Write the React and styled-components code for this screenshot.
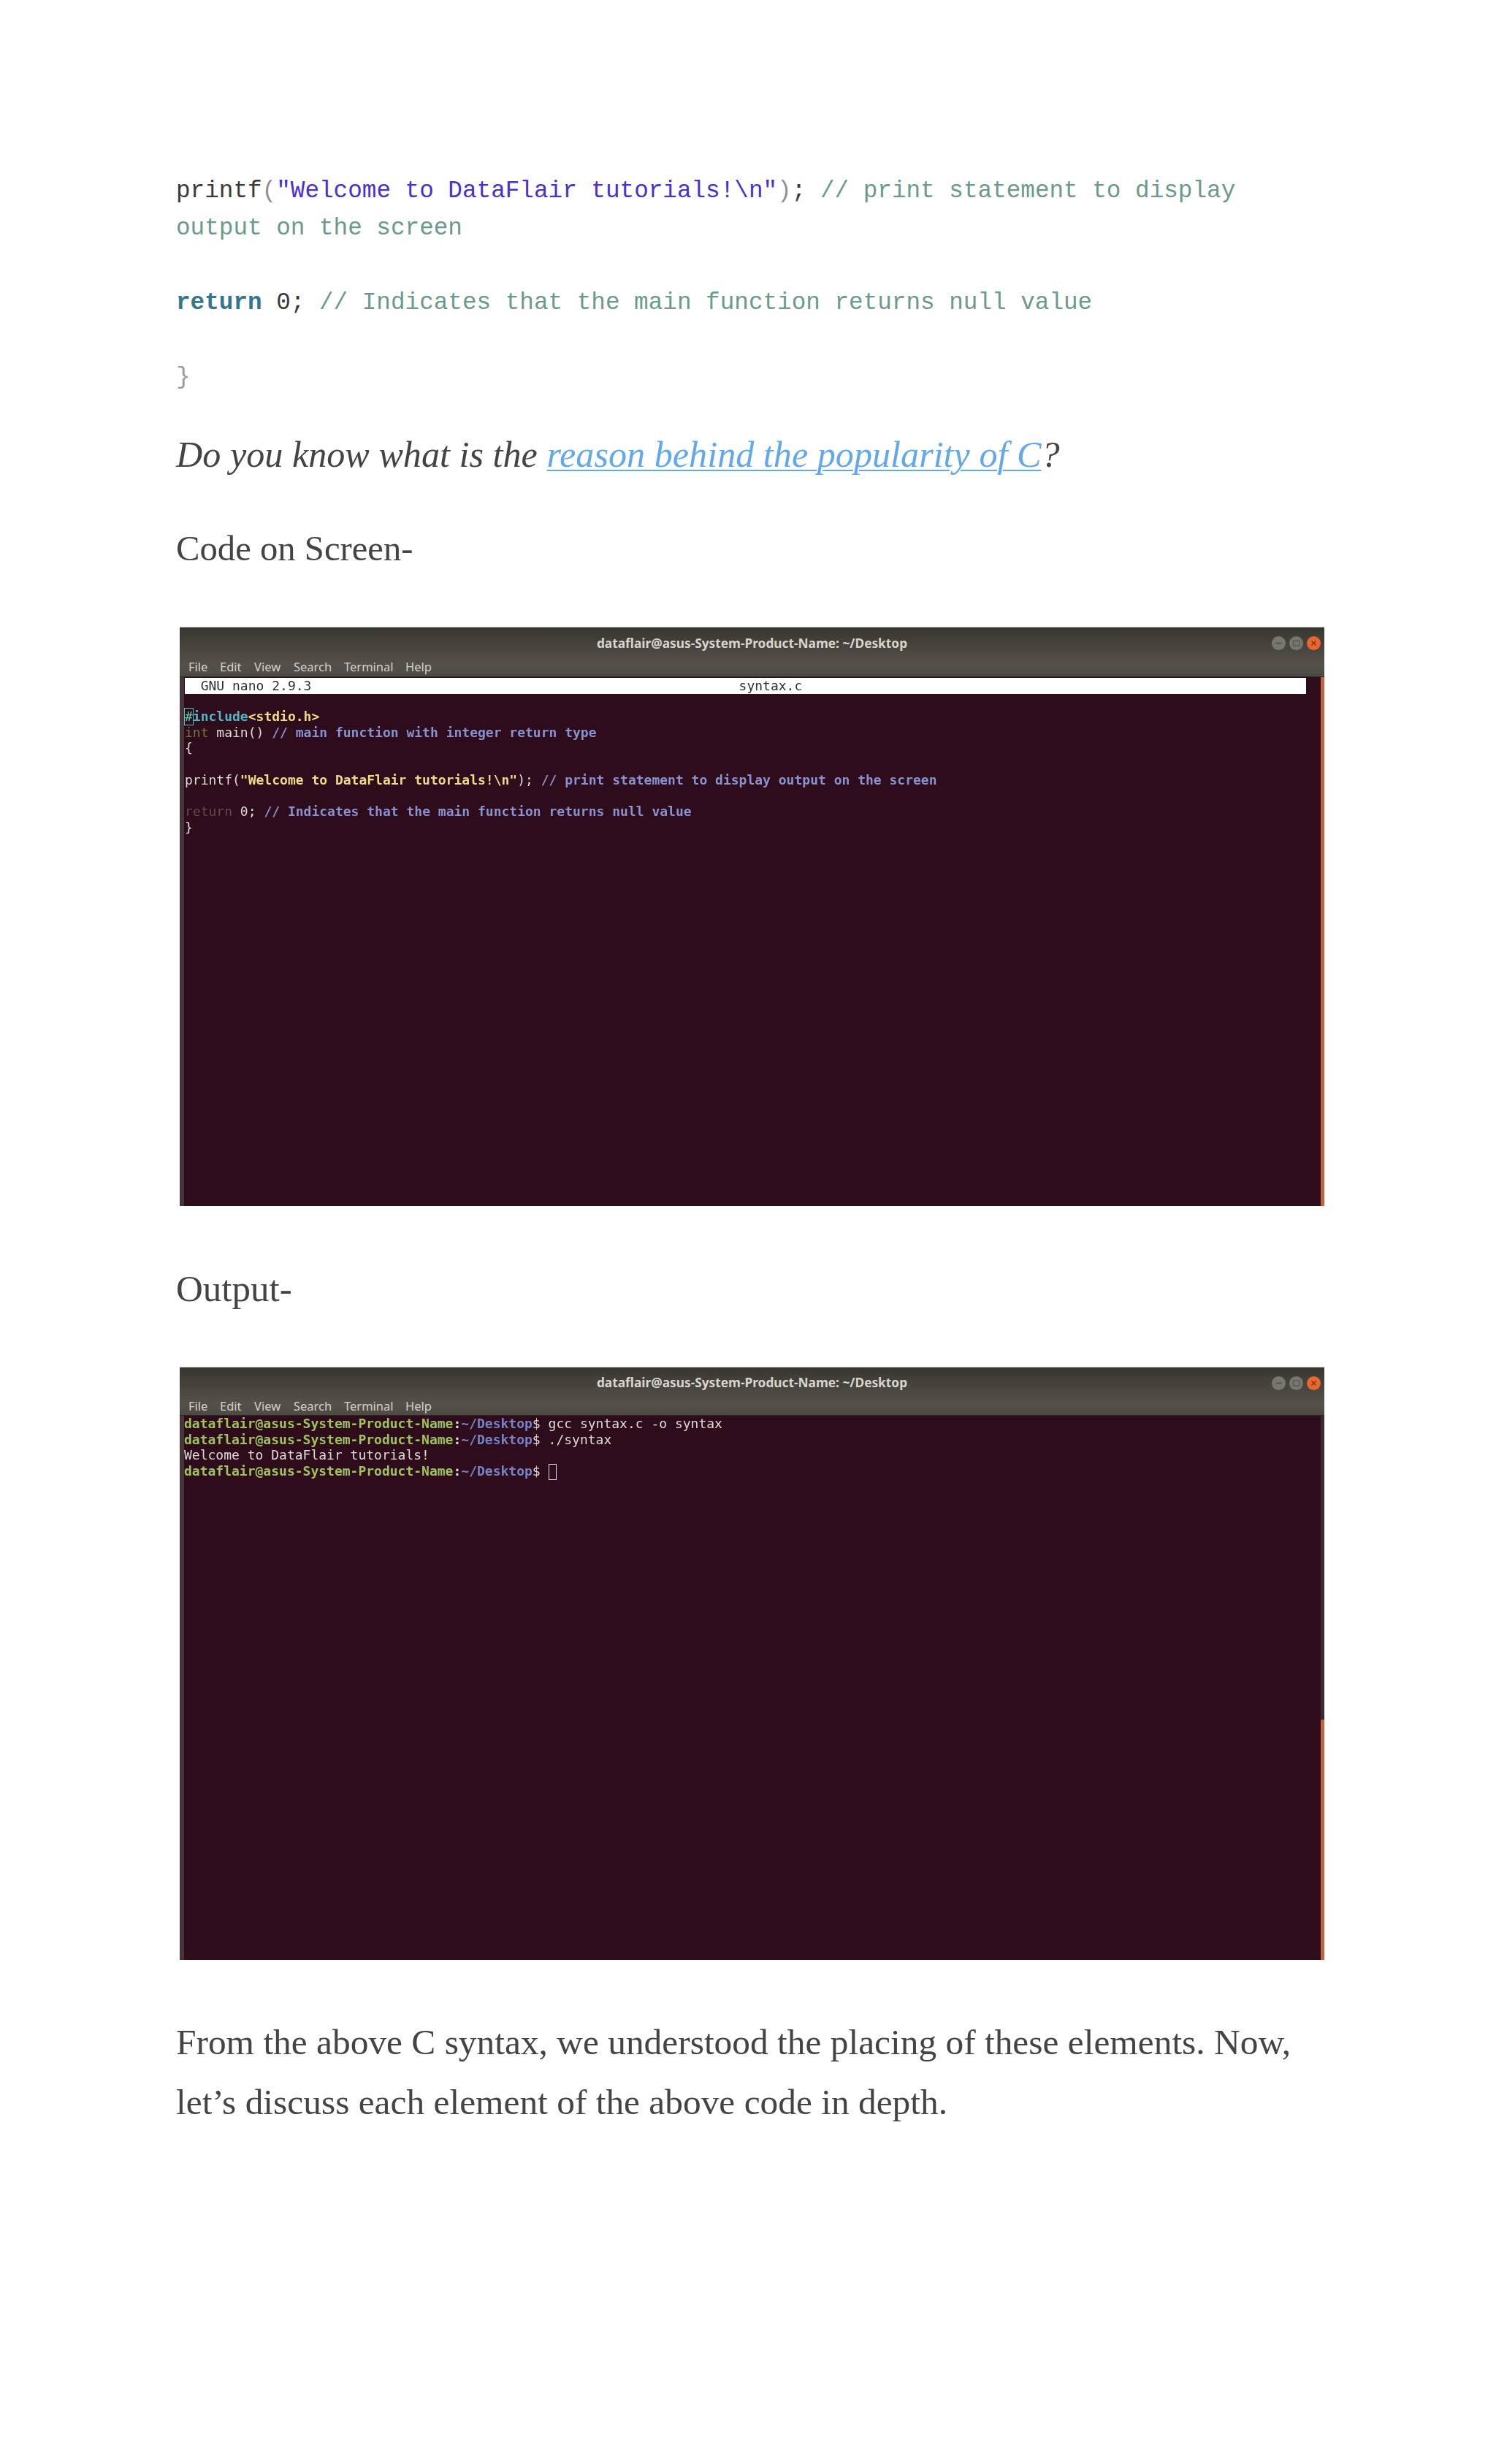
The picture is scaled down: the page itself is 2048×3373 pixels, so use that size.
import styled, { createGlobalStyle } from "styled-components";

const Global = createGlobalStyle`
  html, body { margin: 0; padding: 0; background: #fff; }
`;

const Page = styled.div`
  width: 2048px;
  height: 3373px;
  box-sizing: border-box;
  padding: 236px 0 0 241px;
  overflow: hidden;
  background: #fff;
`;

const CodeLine = styled.p`
  margin: 0 0 51px;
  width: 1500px;
  font-family: "Liberation Mono", "Courier New", monospace;
  font-size: 32.67px;
  line-height: 51px;
  color: #3a3a3a;
`;

const Comment = styled.span`color: #6b9a8c;`;
const Str = styled.span`color: #4a30cc;`;
const Paren = styled.span`color: #8f8f8f;`;
const Keyword = styled.b`color: #36768c;`;
const Brace = styled(CodeLine)`color: #9a9a9a; margin-bottom: 39px;`;

const Para = styled.p`
  margin: 0 0 ${(p) => p.$after || 0}px;
  width: 1570px;
  font-family: "Liberation Serif", Georgia, serif;
  font-size: ${(p) => p.$size}px;
  line-height: 82px;
  color: #444;
`;

const Link = styled.a`
  color: #62a8ec;
  text-decoration: underline;
  text-decoration-thickness: 2px;
  text-underline-offset: 4px;
`;

const Win = styled.div`
  display: flex;
  flex-direction: column;
  width: 1567px;
  height: ${(p) => p.$h}px;
  margin: 0 0 ${(p) => p.$after}px 5px;
  background: #2f0c1b;
  box-shadow: 0 -1px 0 #bbb;
  overflow: hidden;
`;

const TitleBar = styled.div`
  flex: none;
  height: ${(p) => p.$h}px;
  box-sizing: border-box;
  position: relative;
  background: linear-gradient(#37362f 0%, #46433c 35%, #55514a 75%, #4d4a44 100%);
  border-bottom: 1px solid #2a2622;
`;

const Title = styled.div`
  padding-top: ${(p) => p.$top}px;
  text-align: center;
  font-family: "Noto Sans", sans-serif;
  font-weight: 700;
  font-size: 17.3px;
  line-height: 22px;
  color: #d9d5cd;
`;

const Menu = styled.div`
  display: flex;
  padding: 11px 0 0 12px;
  font-family: "Noto Sans", sans-serif;
  font-size: 16.5px;
  line-height: 20px;
  color: #d5d1c9;
`;

const MenuItem = styled.span`
  width: ${(p) => p.$w}px;
`;

const Controls = styled.div`
  position: absolute;
  top: 12px;
  right: 5px;
  display: flex;
  gap: 5px;
`;

const Ctl = styled.span`
  display: flex;
  align-items: center;
  justify-content: center;
  width: 19px;
  height: 19px;
  border-radius: 50%;
  background: ${(p) => (p.$close ? "#e8662f" : "#77766f")};
`;

const Body = styled.div`
  flex: 1;
  display: flex;
  min-height: 0;
  border-left: 6px solid #46363c;
`;

const Screen = styled.div`
  flex: 1;
  min-width: 0;
  font-family: "DejaVu Sans Mono", monospace;
  font-size: 18px;
  line-height: 21.7px;
  color: #dcdcd8;
  white-space: pre;
  filter: blur(0.35px);
`;

const NanoBar = styled.div`
  width: 1535px;
  height: 22px;
  margin: 1px 0 20px 1px;
  background: #fff;
  color: #332f33;
`;

const Line = styled.div`
  height: 21.7px;
  padding-left: ${(p) => p.$pad ?? 1}px;
`;

const Cursor = styled.span`
  display: inline-block;
  outline: 1px solid #4fc3c8;
  outline-offset: 0;
  color: #5fd0b0;
`;

const Box = styled.span`
  display: inline-block;
  width: 11px;
  height: 22px;
  margin-bottom: -6px;
  border: 1px solid #ddd;
  box-sizing: border-box;
`;

const Tint = styled.span`
  color: ${(p) => p.$c};
  font-weight: ${(p) => (p.$b ? 700 : 400)};
`;

const Track = styled.div`
  flex: none;
  width: 5px;
  display: flex;
  flex-direction: column;
  justify-content: flex-end;
  background: #3a2a33;
`;

const Thumb = styled.div`
  height: ${(p) => p.$h}px;
  background: #c6613f;
`;

const MENU = [["File", 43], ["Edit", 47], ["View", 54], ["Search", 69], ["Terminal", 84], ["Help", 50]];
const CMT = "#8793d0";
const YEL = "#eedb86";
const GRN = "#9cc45a";
const BLU = "#7484c8";

const Window = ({ h, after, bar, titleTop, thumb, children }) => (
  <Win $h={h} $after={after}>
    <TitleBar $h={bar}>
      <Title $top={titleTop}>dataflair@asus-System-Product-Name: ~/Desktop</Title>
      <Menu>
        {MENU.map(([m, w]) => (
          <MenuItem key={m} $w={w}>{m}</MenuItem>
        ))}
      </Menu>
      <Controls>
        <Ctl>
          <svg width="11" height="11" viewBox="0 0 11 11"><path d="M1.5 5.5h8" stroke="#4c4b46" strokeWidth="1.5" /></svg>
        </Ctl>
        <Ctl>
          <svg width="11" height="11" viewBox="0 0 11 11"><rect x="1.5" y="2" width="8" height="7" fill="none" stroke="#555" strokeWidth="1.2" /></svg>
        </Ctl>
        <Ctl $close>
          <svg width="11" height="11" viewBox="0 0 11 11"><path d="M2.5 2.5l6 6M8.5 2.5l-6 6" stroke="#8a3514" strokeWidth="1.5" /></svg>
        </Ctl>
      </Controls>
    </TitleBar>
    <Body>
      {children}
      <Track><Thumb $h={thumb} /></Track>
    </Body>
  </Win>
);

const Prompt = () => (
  <>
    <Tint $c={GRN} $b>dataflair@asus-System-Product-Name</Tint>
    <Tint $c="#dcdcd8" $b>:</Tint>
    <Tint $c={BLU} $b>~/Desktop</Tint>$
  </>
);

export default function App() {
  return (
    <Page>
      <Global />
      <CodeLine>
        printf<Paren>(</Paren><Str>"Welcome to DataFlair tutorials!\n"</Str><Paren>)</Paren>; <Comment>// print statement to display output on the screen</Comment>
      </CodeLine>
      <CodeLine>
        <Keyword>return</Keyword> 0; <Comment>// Indicates that the main function returns null value</Comment>
      </CodeLine>
      <Brace>{"}"}</Brace>
      <Para $size={50.2} $after={47}>
        <i>Do you know what is the <Link>reason behind the popularity of C</Link>?</i>
      </Para>
      <Para $size={48.7} $after={67}>Code on Screen-</Para>

      <Window h={792} after={72} bar={68} titleTop={11} thumb={724}>
        <Screen>
          <NanoBar>{"  GNU nano 2.9.3" + " ".repeat(54) + "syntax.c"}</NanoBar>
          <Line>
            <Cursor>#</Cursor><Tint $c="#4fb8c0" $b>include</Tint><Tint $c={YEL} $b>{"<stdio.h>"}</Tint>
          </Line>
          <Line>
            <Tint $c="#75743f">int</Tint> main() <Tint $c={CMT} $b>// main function with integer return type</Tint>
          </Line>
          <Line>{"{"}</Line>
          <Line />
          <Line>
            printf(<Tint $c={YEL} $b>"Welcome to DataFlair tutorials!\n"</Tint>); <Tint $c={CMT} $b>// print statement to display output on the screen</Tint>
          </Line>
          <Line />
          <Line>
            <Tint $c="#6a4552">return</Tint> 0; <Tint $c={CMT} $b>// Indicates that the main function returns null value</Tint>
          </Line>
          <Line>{"}"}</Line>
        </Screen>
      </Window>

      <Para $size={51} $after={67}>Output-</Para>

      <Window h={811} after={72} bar={66} titleTop={10} thumb={329}>
        <Screen>
          <Line $pad={0}><Prompt /> gcc syntax.c -o syntax</Line>
          <Line $pad={0}><Prompt /> ./syntax</Line>
          <Line $pad={0}>Welcome to DataFlair tutorials!</Line>
          <Line $pad={0}><Prompt /> <Box /></Line>
        </Screen>
      </Window>

      <Para $size={49.4}>From the above C syntax, we understood the placing of these elements. Now,</Para>
      <Para $size={49.4}>let’s discuss each element of the above code in depth.</Para>
    </Page>
  );
}
